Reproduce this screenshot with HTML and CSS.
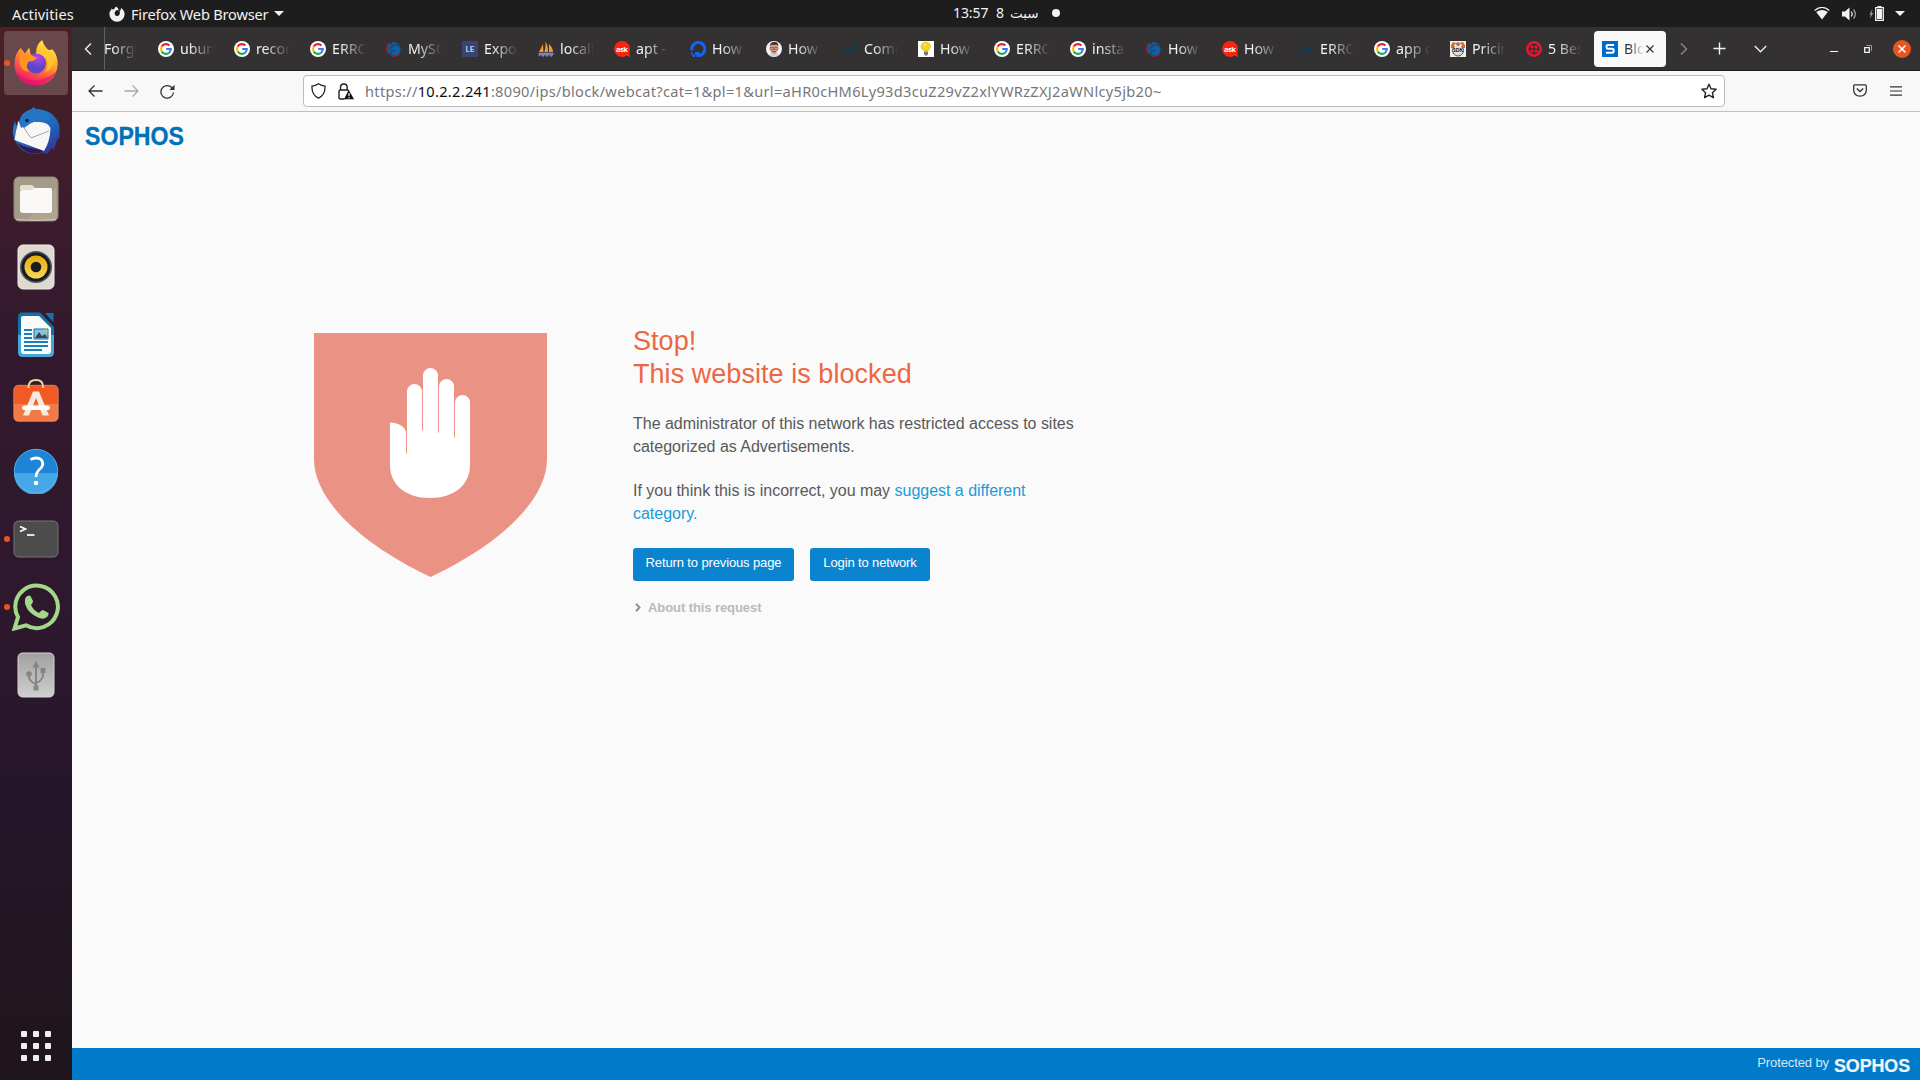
FILE: index.html
```html
<!DOCTYPE html>
<html lang="en">
<head>
<meta charset="utf-8">
<title>Blocked</title>
<link rel="stylesheet" href="styles.css">
</head>
<body>
<svg class="defs" aria-hidden="true">
  <defs>
    <symbol id="google" viewBox="0 0 16 16"><circle cx="8" cy="8" r="8" fill="#fff"/><g fill="none" stroke-width="2.1"><path d="M3.7 5.6A4.9 4.9 0 0 1 11.4 4.5" stroke="#ea1c34"/><path d="M3.7 5.5A4.9 4.9 0 0 0 3.7 10.5" stroke="#fbbc05"/><path d="M3.7 10.4A4.9 4.9 0 0 0 11.2 11.7" stroke="#10b050"/><path d="M11.1 11.7A4.8 4.8 0 0 0 12.8 8H8.2" stroke="#3b78f0"/></g></symbol>
    <symbol id="globe" viewBox="0 0 16 16"><circle cx="8.200" cy="7.800" r="6.500" fill="#0a62a8"/><path d="M3.500 2.200A7.300 7.300 0 0 0 2.500 12.800M5 14.600Q10 16.500 13.800 12.600" fill="none" stroke="#c0202c" stroke-width="1.100"/><path d="M5 2L6.500 5 3.500 7.500l2.500 3-1 3M6.500 5l4-2 3.500 3M6 10.500l3.500-1.500" fill="none" stroke="#333b52" stroke-width="1.100"/></symbol>
    <symbol id="ask" viewBox="0 0 16 16"><path d="M8 0a8 8 0 1 0 4.500 14.700L16 16l-.6-4.800A8 8 0 0 0 8 0z" fill="#f9250b"/><text x="8" y="10.500" text-anchor="middle" font-family="Open Sans" font-weight="bold" font-size="7.500" fill="#fff" textLength="12">ask</text></symbol>
    <symbol id="seal" viewBox="0 0 16 16"><path d="M.5 11.800Q3 8.400 7 8.500Q11 8 12 5Q13.500 3 15.500 3.300Q14.500 5 14 7Q12.500 9.800 10.300 10.700L10.500 12.600 8.500 11.300Q5 10.700 3.200 11.400Q2 12.300.5 11.800z" fill="#07415a"/></symbol>
    <linearGradient id="ffbody" x1=".8" y1="0" x2=".3" y2="1"><stop offset="0" stop-color="#fff24a"/><stop offset=".35" stop-color="#ffb52b"/><stop offset=".65" stop-color="#ff6040"/><stop offset="1" stop-color="#e80f75"/></linearGradient>
    <radialGradient id="ffcore" cx=".6" cy=".2"><stop offset="0" stop-color="#b845f0"/><stop offset="1" stop-color="#5d47c8"/></radialGradient>
    <linearGradient id="bird" x1=".2" y1="0" x2=".8" y2="1"><stop offset="0" stop-color="#2b8ad8"/><stop offset=".6" stop-color="#1f62b8"/><stop offset="1" stop-color="#3a2f94"/></linearGradient>
    <linearGradient id="usb" x1="0" y1="0" x2="0" y2="1"><stop offset="0" stop-color="#a0a0a0"/><stop offset="1" stop-color="#cfcfcf"/></linearGradient>
    <linearGradient id="gold" x1="0" y1="0" x2="0" y2="1"><stop offset="0" stop-color="#e4ac0c"/><stop offset="1" stop-color="#f8d858"/></linearGradient>
  </defs>
</svg>

<header class="topbar">
  <span class="activities">Activities</span>
  <svg class="ffmono" viewBox="0 0 16 16"><path d="M7.200.5Q9.500 2 9.800 4.500Q8.400 3.500 7 4.600Q5 6 5.800 8.500Q7 10.600 9.300 9.800Q11.500 8.500 10.600 5.200Q12 4.700 12 2Q15.600 4.500 15.600 8.300A7.600 7.400 0 0 1 .4 8.300Q.3 5.500 2.300 3.500L2.600 2.500 3.600 3.500 5 3.300Q5.700 1.500 7.200.5z" fill="#f2f2f2"/></svg>
  <span class="appname">Firefox Web Browser</span>
  <i class="caret"></i>
  <div class="clock"><span class="time">13:57</span><span class="day">8</span><span class="week" lang="ar">سبت</span><i class="dot"></i></div>
  <div class="tray">
    <svg width="16" height="13" viewBox="0 0 16 13"><path d="M.7 3.400Q8-2.500 15.300 3.400" fill="none" stroke="#eee" stroke-width="1.300"/><path d="M2.200 5Q8 1 13.800 5L8 12.500z" fill="#f2f2f2"/></svg>
    <svg width="15" height="14" viewBox="0 0 15 14"><path d="M0 4.500h3L7.500.500v13L3 9.500H0z" fill="#f2f2f2"/><path d="M9.300 4.500q1.800 2.500 0 5" fill="none" stroke="#eee" stroke-width="1.200"/><path d="M11.500 2.300q3.600 4.700 0 9.400" fill="none" stroke="#aaa" stroke-width="1.200"/></svg>
    <svg width="15" height="15" viewBox="0 0 15 15"><path d="M3.500 3L.3 8.500h1.500L1 12.500 4.300 7H2.700z" fill="#999"/><path d="M6.700 1.700h7.600v12.600H6.700z" fill="none" stroke="#f2f2f2" stroke-width="1.300"/><path d="M8 3h5v10H8zM8.500 0h4v1.500h-4z" fill="#f2f2f2"/></svg>
    <i class="caret"></i>
  </div>
</header>

<div class="desktop">
  <aside class="dock">
    <div class="app active"><i class="run"></i><div class="tile"><svg width="48" height="48" viewBox="0 0 48 48" class="fox"><path d="M8 9.500L12.500 15 17 8.500 18.500 16.500 24 15Q24 5 30.500 1Q32 7 37 11.500L41.500 11Q47 18 46.500 27A22.500 22.300 0 0 1 1.500 26Q1.500 16 8 9.500z" fill="url(#ffbody)"/><path d="M3 33Q12 44 24 43T45 34Q38 48 24 48T3 33z" fill="#e5116d" opacity=".65"/><circle cx="24" cy="25.500" r="10.500" fill="url(#ffcore)"/><path d="M7 17L17 16 25 19.500Q23 23 16.500 23.500Q12 29 17 34Q9 34 7 26z" fill="#ff9420"/><path d="M25 15Q33 15 36 22Q38 29 33 35Q43 31 43 20Q36 17 33 8Q26 12 25 15z" fill="#ffc92e" opacity=".75"/></svg></div></div>
    <div class="app"><svg width="50" height="50" viewBox="0 0 50 50"><path d="M8 16Q10 6 21 3L22 1 25 3Q44 4 48.500 20V32L46 34 43 44 41 42 36 48 32 47Q12 51 5 36Q-1 27 4 15L5 20z" fill="url(#bird)"/><path d="M6 37Q18 44 33 43L30 47Q13 49 6 37z" fill="#301b54"/><path d="M7 15Q7 20 5 25L3.500 34 33 45Q39 36 39.500 22Q37 16 28 16Q24 15 20 17L13 22z" fill="#f7f7f6"/><path d="M11 19L20 32 38 25" fill="none" stroke="#999" stroke-width=".9"/><path d="M8 16Q10 6 21 3Q35 1.500 39 14Q31 11 27 16Q24 15 20 17L10 22z" fill="#2475c5"/><circle cx="16" cy="14.500" r="1.800" fill="#123"/></svg></div>
    <div class="app"><svg width="46" height="46" viewBox="0 0 46 46"><rect x="1" y="1" width="44" height="44" rx="5" fill="#a49c88" stroke="#8f8875"/><path d="M43 12L14 44H40Q44 44 44 40z" fill="#aea692"/><path d="M3 43.500Q23 45.500 43 43.500" stroke="#d0cbbd" fill="none"/><path d="M7 14V11Q7 9 9 9H19L22 12H37Q39 12 39 14z" fill="#e3dfd3"/><path d="M7 16Q7 14 9 14H19L22 12H37Q39 12 39 14V34Q39 37 36 37H10Q7 37 7 34z" fill="#faf9f8"/></svg></div>
    <div class="app"><svg width="38" height="46" viewBox="0 0 38 46"><rect x="1" y="1" width="36" height="44" rx="5" fill="#dedad0" stroke="#f0eee9"/><circle cx="19" cy="23" r="16" fill="#55585d"/><circle cx="19" cy="23" r="14.500" fill="#191b24"/><circle cx="19" cy="23" r="11.500" fill="url(#gold)"/><circle cx="19" cy="23" r="5.300" fill="#1b1c1e"/></svg></div>
    <div class="app"><svg width="38" height="46" viewBox="0 0 38 46"><path d="M5 .5H23L37 15V40Q37 45 32 45H6Q1 45 1 40V5Q1 .5 5 .5z" fill="#1272a8"/><path d="M1 23H37V40Q37 45 32 45H6Q1 45 1 40z" fill="#49a8d3"/><path d="M6 4H22L34 16V39Q34 42 31 42H7Q4 42 4 39V6Q4 4 6 4z" fill="#fbfbfb"/><path d="M28 1H36.500V10.500z" fill="#1673a8"/><path d="M7 18h8M7 22h8M7 26h8M7 30h24M7 34h24M7 38h18" stroke="#1781bd" stroke-width="2"/><path d="M17 17h14v10H17z" fill="#7dc6e7" stroke="#176f9d"/><path d="M18 26L22 20 25 24 28 22 30.500 26z" fill="#444"/><path d="M27 17.500h3.500V21z" fill="#f5be00"/></svg></div>
    <div class="app"><svg width="46" height="46" viewBox="0 0 46 46" class="bag"><rect x="1" y="8.500" width="44" height="35.500" rx="4.500" fill="#f15a24"/><path d="M1 27H45V39.500Q45 44 40.500 44H5.500Q1 44 1 39.500z" fill="#f47a45"/><rect x=".8" y="8.300" width="44.400" height="36" rx="4.500" fill="none" stroke="#f69b70" stroke-width=".8"/><path d="M15.500 11V9.500Q16 3 23 3T30 9.500V11" fill="none" stroke="#f3d6a8" stroke-width="1.800"/><path d="M10 38.500L20 14.500h6L36 38.500h-6.500L23 21 16 38.500z" fill="#f8e9df"/><rect x="9" y="28.500" width="28" height="4.500" rx="2.200" fill="#fff"/></svg></div>
    <div class="app"><svg width="46" height="46" viewBox="0 0 46 46"><circle cx="23" cy="23" r="22" fill="#1f84d6"/><path d="M1 25H45A22 22 0 0 1 1 25z" fill="#45a7e5"/><circle cx="23" cy="23" r="21.700" fill="none" stroke="#61b5ed" stroke-width=".8"/><path d="M17.500 11.500Q24 8.500 28 11.500Q31.500 15.500 28 20Q23 24 23 29" fill="none" stroke="#fff" stroke-width="2.800"/><circle cx="23" cy="35" r="2.300" fill="#fff"/></svg></div>
    <div class="app"><i class="run"></i><svg width="46" height="38" viewBox="0 0 46 38"><rect x="1" y="1" width="44" height="36" rx="4.500" fill="#4c4c4c" stroke="#757575"/><path d="M7 6.500L12.500 9 7 11.500" fill="none" stroke="#fff" stroke-width="1.700"/><path d="M14 15h7.500" stroke="#fff" stroke-width="1.700"/></svg></div>
    <div class="app"><i class="run"></i><svg width="48" height="48" viewBox="0 0 48 48"><path d="M2.500 45.500L6 34Q3 29 3.300 23A21.300 21.300 0 1 1 14 42.300z" fill="none" stroke="#a4d889" stroke-width="4"/><path d="M14 14Q16.500 11.500 18.500 13L21 18Q21 20 19 22Q21.500 27.500 27 30Q29.500 27 31 27L36.500 30Q37 32 35 34Q31 37 26 34.500Q16 30 13.500 22Q12 17 14 14z" fill="#a4d889"/></svg></div>
    <div class="app"><svg width="38" height="46" viewBox="0 0 38 46"><rect x="1" y="1" width="36" height="44" rx="4.500" fill="url(#usb)" stroke="#d5d5d5"/><g fill="none" stroke="#858585" stroke-width="2"><path d="M19 14V35M12 23Q11 29 19 32M26 21Q27 28 19 31"/></g><path d="M15.500 15.500L19 8.500 22.500 15.500zM23.500 16h5v5h-5zM16.500 33.500h5v5h-5z" fill="#858585"/><circle cx="12" cy="22" r="2.800" fill="#858585"/></svg></div>
    <div class="launcher"><i></i><i></i><i></i><i></i><i></i><i></i><i></i><i></i><i></i></div>
  </aside>

  <main class="browser">
    <nav class="tabs">
      <div class="scroll-left"><svg width="8" height="12" viewBox="0 0 8 12"><path d="M7 .5L1.500 6 7 11.500" fill="none" stroke="#eee" stroke-width="1.400"/></svg></div>
      <span class="label first">Forgo</span>
      <div class="tab"><svg class="fav"><use href="#google"/></svg><span class="label">ubun</span></div>
      <div class="tab"><svg class="fav"><use href="#google"/></svg><span class="label">recor</span></div>
      <div class="tab"><svg class="fav"><use href="#google"/></svg><span class="label">ERRO</span></div>
      <div class="tab"><svg class="fav"><use href="#globe"/></svg><span class="label">MySQ</span></div>
      <div class="tab"><svg class="fav" viewBox="0 0 16 16"><path d="M0 0h16v16H0z" fill="#3b4371"/><text x="8" y="11" text-anchor="middle" font-family="Lato" font-weight="bold" font-size="8" fill="#ccd2ec">LE</text></svg><span class="label">Expo</span></div>
      <div class="tab"><svg class="fav" viewBox="0 0 16 16"><path d="M1 11L5 3 5.500 11zM6.500 11Q8 5 7.500.5Q10 4 10 11zM11 11L11 3Q15 7 15 11z" fill="#f09a2e"/><path d="M.5 12.500h15M1 15l2-2.500 2 2.500 2-2.500 2 2.500 2-2.500 2 2.500 2-2" fill="none" stroke="#8584bd" stroke-width="1.500"/></svg><span class="label">locall</span></div>
      <div class="tab"><svg class="fav"><use href="#ask"/></svg><span class="label">apt -</span></div>
      <div class="tab"><svg class="fav" viewBox="0 0 16 16"><path d="M2 9.500A6.500 6.500 0 1 1 8 14.500V11" fill="none" stroke="#1463ff" stroke-width="3"/><path d="M5 11h3v3H5zM2.500 13.500H5V16H2.500zM.8 11.500h2v2h-2z" fill="#1463ff"/></svg><span class="label">How</span></div>
      <div class="tab"><svg class="fav" viewBox="0 0 16 16"><circle cx="8" cy="8" r="8" fill="#f4f4f6"/><path d="M2.500 13.500Q8 10 13.500 13.500Q8 18 2.500 13.500z" fill="#ccd3dd"/><ellipse cx="8" cy="7.700" rx="4" ry="5.300" fill="#d99c80"/><path d="M3.800 6Q3.500 1 8.500 1Q13 1 12.200 6L11 3.800H5z" fill="#352c2c"/><path d="M4 6.500h3.500v2H4zM8.500 6.500H12v2H8.500z" fill="none" stroke="#555" stroke-width=".6"/><path d="M6 10.500h4" stroke="#a0463c"/></svg><span class="label">How</span></div>
      <div class="tab"><svg class="fav"><use href="#seal"/></svg><span class="label">Com<span>m</span></span></div>
      <div class="tab"><svg class="fav" viewBox="0 0 16 16"><path d="M0 0h16v16H0z" fill="#fff"/><path d="M6 10Q2.500 7.500 3 5Q4 1 8 1Q12.500 1.500 12.500 5.500Q12 8 10 10z" fill="#f3d622" stroke="#d2a71e" stroke-width=".5"/><path d="M6 3.500Q7 2 8.500 2.500Q6.500 4 6 6z" fill="#fff9b5"/><path d="M6 10.500h4v3l-2 1.500-2-1.500z" fill="#777"/></svg><span class="label">How</span></div>
      <div class="tab"><svg class="fav"><use href="#google"/></svg><span class="label">ERRO</span></div>
      <div class="tab"><svg class="fav"><use href="#google"/></svg><span class="label">insta</span></div>
      <div class="tab"><svg class="fav"><use href="#globe"/></svg><span class="label">How</span></div>
      <div class="tab"><svg class="fav"><use href="#ask"/></svg><span class="label">How</span></div>
      <div class="tab"><svg class="fav"><use href="#seal"/></svg><span class="label">ERRO</span></div>
      <div class="tab"><svg class="fav"><use href="#google"/></svg><span class="label">app c</span></div>
      <div class="tab"><svg class="fav" viewBox="0 0 16 16"><path d="M0 0h16v16H0z" fill="#f4f1ea"/><path d="M1 4L3 1 6 2 8 1 10 2 13 1 15 4V7H1z" fill="#d4702d"/><circle cx="8" cy="9.500" r="5.500" fill="#ddd" stroke="#555"/><circle cx="5.500" cy="4.500" r="1.200" fill="#fff"/><circle cx="10.500" cy="4.500" r="1.200" fill="#fff"/><text x="8" y="11" text-anchor="middle" font-family="Lato" font-weight="900" font-size="5" fill="#222">SDK</text></svg><span class="label">Pricin</span></div>
      <div class="tab"><svg class="fav" viewBox="0 0 16 16"><circle cx="8" cy="8" r="6.700" fill="none" stroke="#f2142f" stroke-width="2.500"/><g fill="#f2142f"><circle cx="5.900" cy="5.900" r="1.700"/><circle cx="10.100" cy="5.900" r="1.700"/><circle cx="5.900" cy="10.100" r="1.700"/><circle cx="10.100" cy="10.100" r="1.700"/></g></svg><span class="label">5 Bes</span></div>
      <div class="tab current"><svg class="fav" viewBox="0 0 16 16"><path d="M0 0h16v16H0z" fill="#006ac8"/><path d="M12 4H6Q4.500 4 4.500 5.800T6 7.800H10.200Q11.700 7.800 11.700 9.800T10.200 11.800H4" fill="none" stroke="#fff" stroke-width="2"/></svg><span class="label">Blo</span><svg class="x" viewBox="0 0 8 8"><path d="M.5.5l7 7M7.500.5l-7 7" stroke="#333" stroke-width="1.200"/></svg></div>
      <div class="ctrl right"><svg width="8" height="12" viewBox="0 0 8 12"><path d="M1 .5L6.500 6 1 11.500" fill="none" stroke="#8b898b" stroke-width="1.400"/></svg></div>
      <div class="ctrl plus"><svg width="13" height="13" viewBox="0 0 13 13"><path d="M6.500.5v12M.5 6.500h12" stroke="#f4f4f4" stroke-width="1.400"/></svg></div>
      <div class="ctrl down"><svg width="13" height="8" viewBox="0 0 13 8"><path d="M.8 1L6.500 6.700 12.200 1" fill="none" stroke="#eee" stroke-width="1.400"/></svg></div>
      <div class="win">
        <svg class="min" width="8" height="10" viewBox="0 0 8 10"><path d="M0 7.500h8" stroke="#fff"/></svg>
        <svg width="8" height="8" viewBox="0 0 8 8"><path d="M.7 2.700h4.600v4.600H.7z" fill="none" stroke="#f2f2f2" stroke-width="1.300"/><path d="M2.500.5H7.500V6" fill="none" stroke="#999"/></svg>
        <svg width="18" height="18" viewBox="0 0 18 18"><circle cx="9" cy="9" r="9" fill="#e95420"/><path d="M5.500 5.500l7 7M12.500 5.500l-7 7" stroke="#fff" stroke-width="1.500"/></svg>
      </div>
    </nav>

    <div class="toolbar">
      <div class="navs">
        <svg width="15" height="12" viewBox="0 0 15 12"><path d="M6.500.5L1 6 6.500 11.500M1 6H14.500" fill="none" stroke="#333" stroke-width="1.300"/></svg>
        <svg width="15" height="12" viewBox="0 0 15 12"><path d="M8.500.5L14 6 8.500 11.500M14 6H.5" fill="none" stroke="#aaa" stroke-width="1.300"/></svg>
        <svg width="15" height="15" viewBox="0 0 15 15"><path d="M13.500 8.500A6.300 6.300 0 1 1 11.800 3.500" fill="none" stroke="#333" stroke-width="1.300"/><path d="M14.500.8V6H9.300z" fill="#333"/></svg>
      </div>
      <div class="url">
        <svg width="15" height="16" viewBox="0 0 15 16"><path d="M7.500.8Q10.500 3 14 3.200Q14.500 12 7.500 15.200Q.5 12 1 3.200Q4.500 3 7.500.8z" fill="none" stroke="#222" stroke-width="1.300"/></svg>
        <svg width="16" height="17" viewBox="0 0 16 17"><path d="M6.500 16H2.500Q1 16 1 14.500V8.500Q1 7 2.500 7H9Q10.500 7 10.500 8M2.500 7V4.500Q2.500 1 5.800 1T9.200 4.500V7" fill="none" stroke="#222" stroke-width="1.400"/><path d="M10.700 6.800L16 16.300H6z" fill="#111"/><path d="M11 10v3M11 14v1.300" stroke="#fff" stroke-width="1.200"/></svg>
        <span class="address">https://<b>10.2.2.241</b>:8090/ips/block/webcat?cat=1&amp;pl=1&amp;url=aHR0cHM6Ly93d3cuZ29vZ2xlYWRzZXJ2aWNlcy5jb20~</span>
        <svg class="star" width="16" height="16" viewBox="0 0 16 16"><path d="M8 1.200L10 5.700 15.100 6.300 11.400 9.700 12.400 14.700 8 12.200 3.600 14.700 4.600 9.700.9 6.300 6 5.700z" fill="none" stroke="#222" stroke-width="1.400" stroke-linejoin="round"/></svg>
      </div>
      <div class="tools">
        <svg width="14" height="13" viewBox="0 0 14 13"><path d="M1.700.8H12.300Q13.300.8 13.300 2V6.300Q13 12 7 12.200Q1 12 .7 6.300V2Q.7.8 1.700.8z" fill="none" stroke="#333" stroke-width="1.300"/><path d="M3.800 4.500L7 7.500 10.200 4.500" fill="none" stroke="#333" stroke-width="1.400"/></svg>
        <svg width="12" height="10" viewBox="0 0 12 10"><path d="M0 .8h12M0 5h12M0 9.200h12" stroke="#333" stroke-width="1.200"/></svg>
      </div>
    </div>

    <section class="page">
      <svg class="brand" width="102" height="22" viewBox="0 0 102 22"><text x="1" y="20" textLength="99" lengthAdjust="spacingAndGlyphs">SOPHOS</text></svg>
      <div class="notice">
        <svg class="shield" width="233" height="244" viewBox="0 0 233 244"><path d="M0 0H233V126C233 170 180 214 116.500 244C53 214 0 170 0 126z" fill="#ea9384"/><path d="M76 89.500C84 89.500 92 94 92 100V120.500H93V58.500a7.500 7.500 0 0 1 15 0V97.500H109V42.500a7.500 7.500 0 0 1 15 0V99.500H125V53.500a7.500 7.500 0 0 1 15 0V104.500H141V69.500a7.500 7.500 0 0 1 15 0V132C156 152 140 165 116 165S76 152 76 132z" fill="#fff"/></svg>
        <div class="copy">
          <h1>Stop!<br>This website is blocked</h1>
          <p>The administrator of this network has restricted access to sites<br>categorized as Advertisements.</p>
          <p>If you think this is incorrect, you may <a>suggest a different<br>category.</a></p>
          <div class="buttons"><button class="back">Return to previous page</button><button class="login">Login to network</button></div>
          <div class="about"><svg width="6" height="9" viewBox="0 0 6 9"><path d="M1 .8L4.500 4.500 1 8.200" fill="none" stroke="#8e9299" stroke-width="2"/></svg><span>About this request</span></div>
        </div>
      </div>
    </section>
    <footer class="foot"><span>Protected by</span><svg width="78" height="15" viewBox="0 0 78 15"><text x="1" y="13.500" textLength="76" lengthAdjust="spacingAndGlyphs">SOPHOS</text></svg></footer>
  </main>
</div>
</body>
</html>
```
FILE: styles.css
```css
* { box-sizing: border-box; }
body { margin: 0; width: 1920px; height: 1080px; overflow: hidden; display: flex; flex-direction: column; font-family: "Noto Sans", "DejaVu Sans", sans-serif; }
svg { display: block; flex: none; }
.defs { position: absolute; width: 0; height: 0; }

.topbar { height: 27px; flex: none; background: #1d1d1d; color: #f2f2f2; display: flex; align-items: center; position: relative; padding-left: 12px; font-size: 14.600px; line-height: 26px; white-space: nowrap; }
.activities { width: 97px; letter-spacing: .1px; }
.ffmono { width: 16px; height: 16px; margin-right: 6px; }
.appname { width: 143px; letter-spacing: -.2px; }
.caret { width: 0; height: 0; border: 5px solid transparent; border-top-color: #f2f2f2; border-bottom: 0; }
.clock { display: flex; align-items: center; margin-left: 669px; font-size: 14px; line-height: 24px; padding-bottom: 1px; }
.time { width: 43px; letter-spacing: -.1px; }
.day { width: 14px; }
.week { width: 42px; font-family: "DejaVu Sans", sans-serif; font-size: 13.500px; }
.dot { width: 8px; height: 8px; border-radius: 50%; background: #f2f2f2; }
.tray { margin-left: auto; margin-right: 15px; display: flex; align-items: center; gap: 11px; }
.tray svg + svg { margin-left: 1px; }

.desktop { flex: 1; display: flex; min-height: 0; }
.dock { width: 72px; flex: none; padding-top: 2px; display: flex; flex-direction: column; background: linear-gradient(#4a2021 0, #421e2a 90px, #34192e 300px, #2e182d 560px, #251629 780px, #21151d 1000px); }
.app { height: 68px; display: flex; align-items: center; justify-content: center; position: relative; }
.tile { width: 64px; height: 64px; border-radius: 4px; background: #68484b; display: flex; align-items: center; justify-content: center; }
.fox { width: 46px; height: 46px; margin-top: -2px; }
.run { position: absolute; left: 4px; top: 31px; width: 6px; height: 6px; border-radius: 50%; background: #e95420; z-index: 1; }
.bag { margin-top: -6px; }
.launcher { margin: auto 21px 19px; display: grid; grid-template-columns: repeat(3, 6px); gap: 6px; }
.launcher i { height: 6px; border-radius: 1px; background: #eeeeec; }

.browser { flex: 1; display: flex; flex-direction: column; min-width: 0; }
.tabs { height: 44px; flex: none; background: #333132; border-bottom: 1px solid #1f1e1f; display: flex; align-items: center; color: #f2f2f2; font-size: 14.200px; }
.scroll-left { width: 33px; height: 43px; flex: none; border-right: 1px solid #626162; display: flex; align-items: center; justify-content: center; }
.label { width: 34px; overflow: hidden; white-space: nowrap; line-height: 22px; padding-top: 1px; -webkit-mask-image: linear-gradient(90deg, #000 25%, transparent); mask-image: linear-gradient(90deg, #000 25%, transparent); }
.first { margin-left: -1px; margin-right: 11px; width: 33px; }
.tab { width: 76px; height: 36px; flex: none; display: flex; align-items: center; padding-left: 10px; gap: 6px; }
.fav { width: 16px; height: 16px; }
.current { width: 72px; margin: 0 2px; padding-left: 8px; background: #f9f9fa; color: #333; border-radius: 4px; }
.current .label { width: 20px; }
.x { width: 8px; height: 8px; margin-left: -4px; }
.ctrl { display: flex; align-items: center; justify-content: center; }
.right { width: 32px; }
.plus { width: 39px; }
.down { width: 42px; }
.win { margin-left: auto; margin-right: 9px; display: flex; align-items: center; }
.win svg + svg { margin-left: 26px; }
.win svg + svg + svg { margin-left: 21px; }

.toolbar { height: 41px; flex: none; background: #f8f8f9; border-bottom: 1px solid #c0c0c1; display: flex; align-items: center; padding: 0 18px 0 16px; }
.navs { display: flex; gap: 21px; align-items: center; width: 215px; }
.url { width: 1422px; height: 32px; background: #fff; border: 1px solid #bdbdbe; border-radius: 4px; display: flex; align-items: center; padding: 0 7px; }
.url svg + svg { margin-left: 12px; }
.address { margin-left: 11px; color: #77777a; font-size: 14.600px; letter-spacing: .3px; white-space: nowrap; }
.address b { color: #0c0c0d; font-weight: normal; }
.url .star { margin-left: auto; }
.tools { margin-left: auto; display: flex; align-items: center; gap: 23px; padding-bottom: 1px; }

.page { flex: 1; background: #fafafa; padding: 13px 0 0 12px; font-family: "Liberation Sans", Arial, sans-serif; }
.brand text { font: bold 25.500px "Liberation Sans", sans-serif; fill: #0072b8; stroke: #0072b8; stroke-width: .3px; }
.notice { display: flex; gap: 86px; margin: 186px 0 0 230px; }
.copy { margin-top: -8px; color: #58595b; font-size: 16px; line-height: 23px; letter-spacing: -.02px; }
h1 { margin: 0; font-size: 27px; line-height: 33px; font-weight: normal; letter-spacing: .05px; color: #ec6744; }
p { margin: 21px 0 0; white-space: nowrap; }
a { color: #1b9bd8; }
.buttons { display: flex; gap: 16px; margin-top: 23px; }
button { height: 33px; border: 0; border-radius: 3px; padding: 0 0 4px; background: #0a84cf; color: #fff; font: 13px "Liberation Sans", Arial, sans-serif; letter-spacing: -.13px; }
.back { width: 161px; }
.login { width: 120px; }
.about { display: flex; align-items: center; margin-top: 15px; padding-left: 2px; gap: 7px; font-size: 13px; letter-spacing: -.08px; font-weight: bold; color: #b9babc; }
.foot { height: 32px; flex: none; background: #007ac9; display: flex; justify-content: flex-end; align-items: center; gap: 4px; padding-right: 9px; font: 13px "Liberation Sans", Arial, sans-serif; letter-spacing: -.1px; color: #d5e8f5; }
.foot span { padding-bottom: 3px; }
.foot svg { margin-top: 2px; }
.foot text { font: bold 17.500px "Liberation Sans", sans-serif; fill: #eef6fb; stroke: #eef6fb; stroke-width: .2px; }
```
